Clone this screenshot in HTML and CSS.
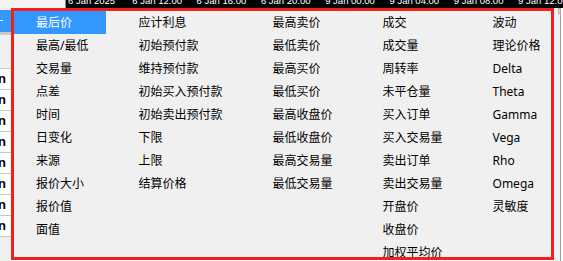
FILE: index.html
```html
<!DOCTYPE html>
<html lang="zh">
<head>
    <meta charset="UTF-8">
    <title>Columns menu</title>
    <link rel="stylesheet" href="styles.css">
</head>
<body>

    <!-- Background application -->
    <div class="app">
        <div class="axis">
            <div class="axis-gap"></div>
            <div class="axis-bar">
                <span>6 Jan 2025</span>
                <span>6 Jan 12:00</span>
                <span>6 Jan 16:00</span>
                <span>6 Jan 20:00</span>
                <span>9 Jan 00:00</span>
                <span>9 Jan 04:00</span>
                <span>9 Jan 08:00</span>
                <span>9 Jan 12:00</span>
            </div>
        </div>
        <div class="main">
            <div class="side">
                <div class="side-head"><span class="dash"></span></div>
                <div class="side-sub"></div>
                <div class="side-row">n</div>
                <div class="side-row">n</div>
                <div class="side-row">n</div>
                <div class="side-row">n</div>
                <div class="side-row">n</div>
                <div class="side-row">n</div>
                <div class="side-row">n</div>
                <div class="side-row">n</div>
            </div>
            <div class="chart"></div>
            <div class="scroll"><div class="scroll-btn"></div></div>
        </div>
    </div>

    <!-- Column picker dropdown -->
    <div class="menu">
        <div class="col">
            <div class="item active">最后价</div>
            <div class="item">最高/最低</div>
            <div class="item">交易量</div>
            <div class="item">点差</div>
            <div class="item">时间</div>
            <div class="item">日变化</div>
            <div class="item">来源</div>
            <div class="item">报价大小</div>
            <div class="item">报价值</div>
            <div class="item">面值</div>
        </div>
        <div class="col">
            <div class="item">应计利息</div>
            <div class="item">初始预付款</div>
            <div class="item">维持预付款</div>
            <div class="item">初始买入预付款</div>
            <div class="item">初始卖出预付款</div>
            <div class="item">下限</div>
            <div class="item">上限</div>
            <div class="item">结算价格</div>
        </div>
        <div class="col">
            <div class="item">最高卖价</div>
            <div class="item">最低卖价</div>
            <div class="item">最高买价</div>
            <div class="item">最低买价</div>
            <div class="item">最高收盘价</div>
            <div class="item">最低收盘价</div>
            <div class="item">最高交易量</div>
            <div class="item">最低交易量</div>
        </div>
        <div class="col">
            <div class="item">成交</div>
            <div class="item">成交量</div>
            <div class="item">周转率</div>
            <div class="item">未平仓量</div>
            <div class="item">买入订单</div>
            <div class="item">买入交易量</div>
            <div class="item">卖出订单</div>
            <div class="item">卖出交易量</div>
            <div class="item">开盘价</div>
            <div class="item">收盘价</div>
            <div class="item">加权平均价</div>
        </div>
        <div class="col">
            <div class="item">波动</div>
            <div class="item">理论价格</div>
            <div class="item">Delta</div>
            <div class="item">Theta</div>
            <div class="item">Gamma</div>
            <div class="item">Vega</div>
            <div class="item">Rho</div>
            <div class="item">Omega</div>
            <div class="item">灵敏度</div>
        </div>
    </div>

</body>
</html>
```

FILE: styles.css
```css
* {
    margin: 0;
    padding: 0;
    box-sizing: border-box;
}

body {
    width: 563px;
    height: 261px;
    overflow: hidden;
    position: relative;
    background-color: #f0f0f0;
    font-family: 'Noto Sans', 'Noto Sans CJK SC', sans-serif;
}

/* Background application */
.app {
    display: flex;
    flex-direction: column;
    height: 100%;
}

.axis {
    display: flex;
    height: 8px;
}

.axis-gap {
    width: 66px;
    background-color: #f4f4f4;
    border-right: 1px solid #8c8c8c;
}

.axis-bar {
    flex: 1;
    display: flex;
    padding-left: 2px;
    background-color: #000;
    overflow: hidden;
}

.axis-bar span {
    flex: 0 0 64.3px;
    color: #fff;
    font-family: 'Liberation Sans', sans-serif;
    font-size: 9.5px;
    line-height: 10px;
    margin-top: -4px;
    white-space: nowrap;
}

.main {
    flex: 1;
    display: flex;
}

.side {
    width: 11px;
    display: flex;
    flex-direction: column;
    background-color: #f0f0f0;
    overflow: hidden;
}

.side-head {
    height: 25px;
    margin-top: 2px;
    background-color: #3399ff;
    border-bottom: 3px solid #c8c8c8;
    padding-top: 10px;
}

.dash {
    display: block;
    width: 3px;
    height: 1px;
    background-color: #fff;
}

.side-sub {
    height: 34px;
    border-bottom: 1px solid #d0d0d0;
}

.side-row {
    height: 21px;
    background-color: #fff;
    border-bottom: 1px solid #c8c8c8;
    font-family: 'Liberation Sans', sans-serif;
    font-size: 13px;
    font-weight: bold;
    line-height: 20px;
    margin-left: -2px;
}

.chart {
    flex: 1;
    background-color: #fff;
}

.scroll {
    width: 9px;
    background-color: #f0f0f0;
    border-right: 2px solid #fafafa;
    box-shadow: inset -1px 0 0 #a0a0a0;
}

.scroll-btn {
    height: 6px;
    margin-left: 4px;
    background-color: #dcdcdc;
    border: 1px solid #b0b0b0;
}

/* Column picker dropdown, drawn over the app */
.menu {
    position: absolute;
    left: 11px;
    top: 8px;
    width: 543px;
    height: 252px;
    display: flex;
    gap: 10px;
    background-color: #f0f0f0;
    border: 3px solid #f2201a;
    overflow: hidden;
    font-size: 12px;
    color: #000;
}

.col {
    display: flex;
    flex-direction: column;
}

.item {
    height: 23px;
    line-height: 23px;
    padding: 0 18px 0 22px;
    white-space: nowrap;
}

.item.active {
    background-color: #3399ff;
    color: #fff;
}
```
